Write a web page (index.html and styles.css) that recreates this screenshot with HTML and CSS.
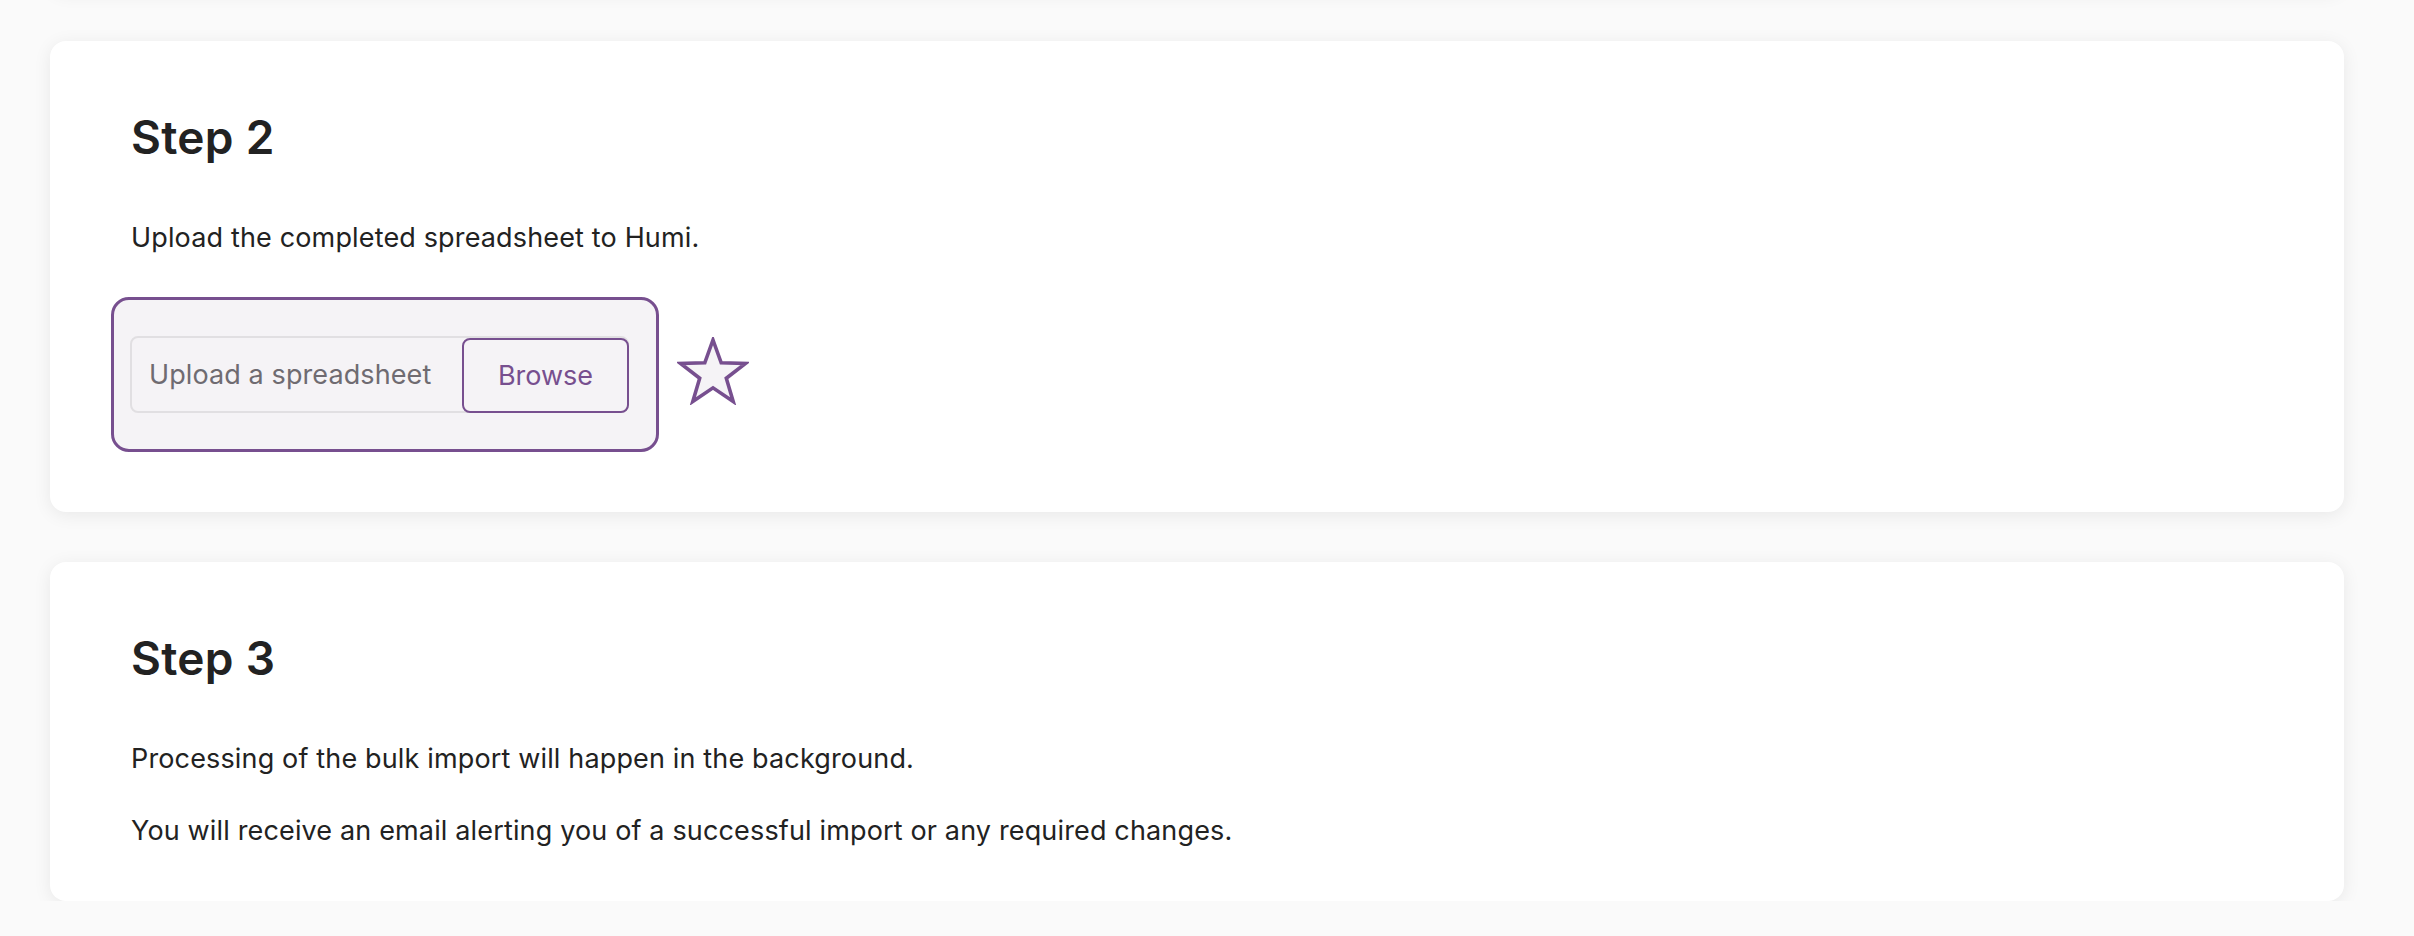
FILE: index.html
```html
<!DOCTYPE html>
<html lang="en">
<head>
<meta charset="utf-8">
<title>Bulk import</title>
<link rel="stylesheet" href="styles.css">
</head>
<body>
<main class="page">
  <section class="card card-prev"></section>

  <section class="card">
    <h2 class="step-title">Step 2</h2>
    <p class="step-text">Upload the completed spreadsheet to Humi.</p>
    <div class="upload-row">
      <div class="upload-focus">
        <div class="file-input">
          <span class="file-placeholder">Upload a spreadsheet</span>
          <button class="browse-btn" type="button">Browse</button>
        </div>
      </div>
      <svg class="star" width="72" height="68" viewBox="0 0 72 68" aria-hidden="true">
        <polygon points="36,3 44.2,25.8 68.5,26.4 49.3,41.2 56.2,64.5 36,50.8 15.8,64.5 22.7,41.2 3.5,26.4 27.8,25.8" fill="#f5f3f6" stroke="#774f8f" stroke-width="3.6" stroke-linejoin="miter"/>
      </svg>
    </div>
  </section>

  <section class="card card-last">
    <h2 class="step-title">Step 3</h2>
    <p class="step-text">Processing of the bulk import will happen in the background.</p>
    <p class="step-text step-text-next">You will receive an email alerting you of a successful import or any required changes.</p>
  </section>
</main>
</body>
</html>
```

FILE: styles.css
```css
* {
  box-sizing: border-box;
}

html, body {
  margin: 0;
  padding: 0;
}

body {
  background: #fafafa;
  font-family: Inter, "Noto Sans", "Liberation Sans", sans-serif;
  color: #232323;
  overflow: hidden;
}

.page {
  display: flex;
  flex-direction: column;
  gap: 50px;
  padding: 0 70px 0 50px;
  margin-top: -109px;
}

.card {
  background: #ffffff;
  border-radius: 16px;
  box-shadow: 0 3px 18px rgba(0, 0, 0, 0.075);
  padding: 68px 81px 60px 81px;
}

.card-prev {
  height: 100px;
  padding: 0;
}

.card-last {
  padding-bottom: 50px;
}

.step-title {
  margin: 0 0 53px 0;
  font-size: 46px;
  line-height: 56px;
  font-weight: 600;
  color: #222222;
  letter-spacing: 0.3px;
}

.step-text {
  margin: 0;
  font-size: 27px;
  line-height: 40px;
  font-weight: 400;
  color: #222222;
  letter-spacing: 0.15px;
}

.step-text-next {
  margin-top: 32px;
}

.upload-row {
  display: flex;
  align-items: center;
  gap: 18px;
  margin-top: 39px;
  margin-left: -20px;
}

.upload-focus {
  width: 548px;
  height: 155px;
  border: 3px solid #774f8f;
  border-radius: 18px;
  background: #f5f3f6;
  padding: 36px 27px 36px 16px;
}

.file-input {
  display: flex;
  align-items: flex-end;
  height: 77px;
  border: 2px solid #e1dfe2;
  border-radius: 8px;
  background: #f5f3f6;
}

.file-placeholder {
  flex: 1;
  align-self: center;
  padding-left: 17px;
  font-size: 27px;
  color: #6f6b71;
  white-space: nowrap;
  letter-spacing: 0.1px;
}

.browse-btn {
  width: 167px;
  height: 75px;
  margin: 0 -2px -2px 0;
  border: 2px solid #774f8f;
  border-radius: 8px;
  background: #f5f3f6;
  color: #774f8f;
  font-family: inherit;
  font-size: 27px;
  font-weight: 400;
  padding: 0;
  cursor: pointer;
}

.star {
  display: block;
  flex: none;
  margin-top: -8px;
}
```
